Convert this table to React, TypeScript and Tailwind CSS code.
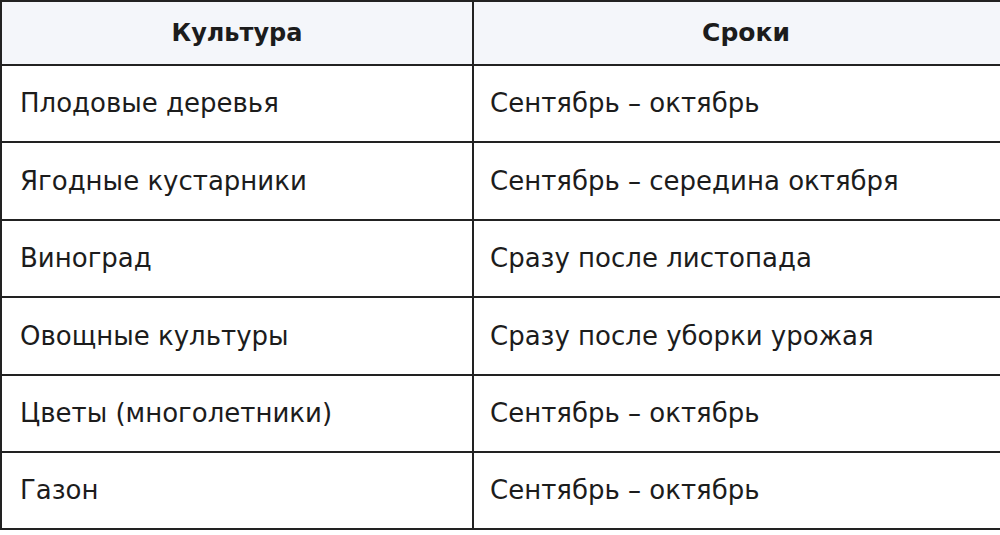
import React from "react";

const rows: [string, string, string][] = [
  ["Плодовые деревья", "Сентябрь – октябрь", "h-[77px]"],
  ["Ягодные кустарники", "Сентябрь – середина октября", "h-[78px]"],
  ["Виноград", "Сразу после листопада", "h-[77px]"],
  ["Овощные культуры", "Сразу после уборки урожая", "h-[78px]"],
  ["Цветы (многолетники)", "Сентябрь – октябрь", "h-[77px]"],
  ["Газон", "Сентябрь – октябрь", "h-[75px]"],
];

export default function App() {
  return (
    <div
      className="w-[1000px] h-[535px] overflow-hidden bg-white text-[#1c1c1c]"
      style={{ fontFamily: '"DejaVu Sans", "Noto Sans", sans-serif' }}
    >
      <div className="w-[1020px] border-2 border-[#222]">
        <div className="flex h-[64px] bg-[#f4f6fa] border-b-2 border-[#222] text-[24px] font-bold">
          <div className="w-[472px] flex items-center justify-center border-r-2 border-[#222]">Культура</div>
          <div className="flex-1 flex items-center justify-center text-[25px]">Сроки</div>
        </div>
        {rows.map(([a, b, h], i) => (
          <div
            key={i}
            className={`flex ${h} text-[26px] ${i < rows.length - 1 ? "border-b-2 border-[#222]" : ""}`}
          >
            <div className="w-[472px] flex items-center pl-[18px] border-r-2 border-[#222]">{a}</div>
            <div className="flex-1 flex items-center pl-[16px]">{b}</div>
          </div>
        ))}
      </div>
    </div>
  );
}
